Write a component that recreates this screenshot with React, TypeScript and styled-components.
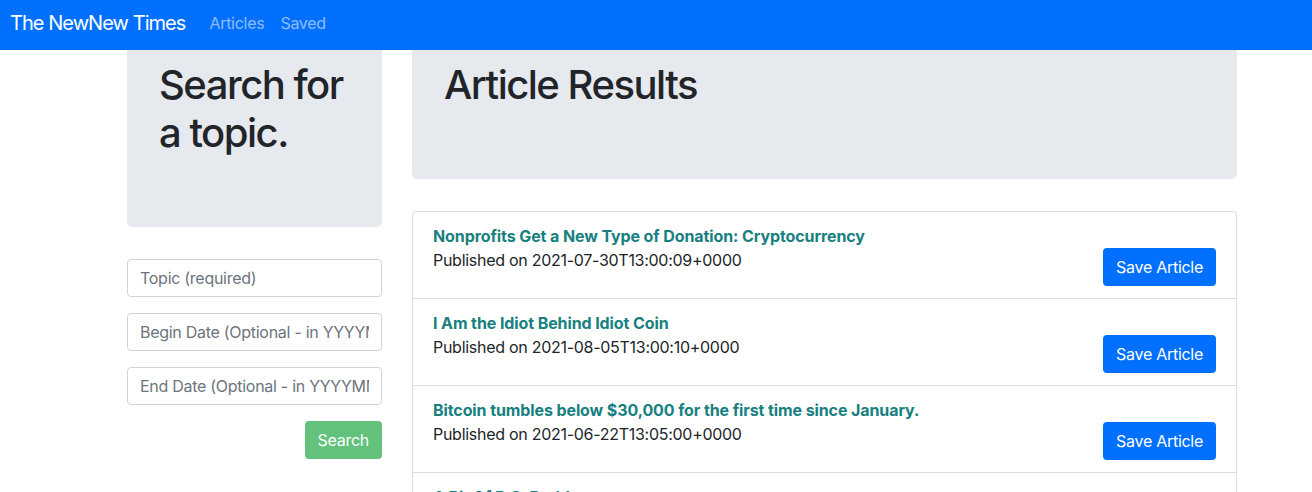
import React from "react";
import styled, { createGlobalStyle } from "styled-components";

const Global = createGlobalStyle`
  html, body { margin: 0; padding: 0; overflow: hidden; background: #fff; }
  body {
    font-family: Inter, "Noto Sans", "Liberation Sans", sans-serif;
    font-size: 16px;
    line-height: 1.5;
    color: #212529;
    letter-spacing: -0.28px;
  }
  * { box-sizing: border-box; }
`;

const Navbar = styled.nav`
  height: 50px;
  background: #0270fe;
  display: flex;
  align-items: center;
  padding: 0 10px 4px;
`;

const Brand = styled.a`
  color: #fff;
  font-size: 20px;
  margin-right: 24px;
  letter-spacing: -0.95px;
`;

const NavLink = styled.a`
  color: rgba(255, 255, 255, 0.55);
  font-size: 16px;
  margin-right: 16px;
`;

const Main = styled.div`
  display: flex;
  gap: 30px;
  padding-left: 127px;
  width: 1237px;
`;

const Side = styled.div`
  width: 255px;
  flex: none;
  display: flex;
  flex-direction: column;
`;

const Content = styled.div`
  flex: 1;
  display: flex;
  flex-direction: column;
`;

const Jumbo = styled.div<{ $bottom: number }>`
  background: #e6e9ed;
  border-radius: 0 0 5px 5px;
  padding: 11px 32px ${(p) => p.$bottom}px 32px;
  margin-bottom: 32px;
`;

const Heading = styled.h1`
  margin: 0 0 8px;
  font-size: 40px;
  font-weight: 500;
  line-height: 48px;
  letter-spacing: -1.5px;
`;

const Input = styled.input`
  display: block;
  width: 100%;
  height: 38px;
  padding: 6px 12px;
  font-family: inherit;
  font-size: 16px;
  letter-spacing: -0.28px;
  border: 1px solid #ced4da;
  border-radius: 4px;
  margin-bottom: 16px;
  color: #495057;
  &::placeholder { color: #6c757d; }
`;

const ButtonRow = styled.div`
  display: flex;
  justify-content: flex-end;
`;

const SearchButton = styled.button`
  height: 38px;
  padding: 0 13px;
  border: none;
  border-radius: 4px;
  background: #62c27c;
  color: #fff;
  font-family: inherit;
  font-size: 16px;
  letter-spacing: -0.28px;
`;

const List = styled.div`
  border: 1px solid #dcdcdc;
  border-radius: 4px;
`;

const Item = styled.div`
  padding: 12px 20px 12px 20px;
  height: 87px;
  border-top: 1px solid #dcdcdc;
  &:first-child { border-top: none; height: 86px; }
`;

const Title = styled.a`
  display: block;
  color: #178080;
  font-weight: 700;
  font-size: 16px;
  line-height: 24px;
  letter-spacing: -0.1px;
`;

const ItemRow = styled.div`
  display: flex;
  justify-content: space-between;
  align-items: flex-start;
`;

const Published = styled.span`
  line-height: 24px;
`;

const SaveButton = styled.button`
  height: 38px;
  padding: 0 13px;
  border: none;
  border-radius: 4px;
  background: #0270fe;
  color: #fff;
  font-family: inherit;
  font-size: 16px;
  letter-spacing: -0.28px;
`;

const articles = [
  { title: "Nonprofits Get a New Type of Donation: Cryptocurrency", date: "2021-07-30T13:00:09+0000" },
  { title: "I Am the Idiot Behind Idiot Coin", date: "2021-08-05T13:00:10+0000" },
  { title: "Bitcoin tumbles below $30,000 for the first time since January.", date: "2021-06-22T13:05:00+0000" },
  { title: "A Bit Of B.S. Buddy", date: "2021-05-12T13:00:00+0000" },
];

export default function App() {
  return (
    <>
      <Global />
      <Navbar>
        <Brand>The NewNew Times</Brand>
        <NavLink>Articles</NavLink>
        <NavLink>Saved</NavLink>
      </Navbar>
      <Main>
        <Side>
          <Jumbo $bottom={62}>
            <Heading>Search for a topic.</Heading>
          </Jumbo>
          <Input placeholder="Topic (required)" />
          <Input placeholder="Begin Date (Optional - in YYYYMMDD format)" />
          <Input placeholder="End Date (Optional - in YYYYMMDD format)" />
          <ButtonRow>
            <SearchButton>Search</SearchButton>
          </ButtonRow>
        </Side>
        <Content>
          <Jumbo $bottom={62}>
            <Heading>Article Results</Heading>
          </Jumbo>
          <List>
            {articles.map((a) => (
              <Item key={a.title}>
                <Title>{a.title}</Title>
                <ItemRow>
                  <Published>Published on {a.date}</Published>
                  <SaveButton>Save Article</SaveButton>
                </ItemRow>
              </Item>
            ))}
          </List>
        </Content>
      </Main>
    </>
  );
}
